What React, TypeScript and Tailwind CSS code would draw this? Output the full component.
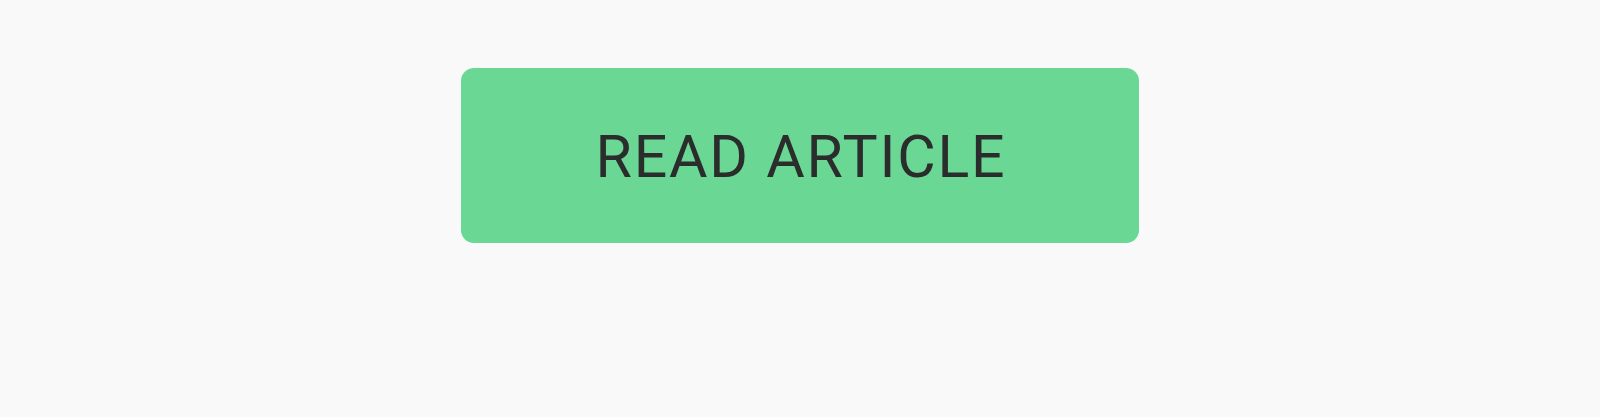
export default function App() {
  return (
    <div className="min-h-[417px] w-full bg-[#f8f9f8] flex justify-center pt-[68px]" style={{ fontFamily: 'Roboto, "Liberation Sans", Arial, sans-serif' }}>
      <button className="w-[678px] h-[175px] rounded-[13px] bg-[#6ad795] flex items-center justify-center text-[#2a2d2b] text-[59px] font-normal leading-none tracking-[1.8px] pl-[2px] pt-[2px]">
        READ ARTICLE
      </button>
    </div>
  );
}
